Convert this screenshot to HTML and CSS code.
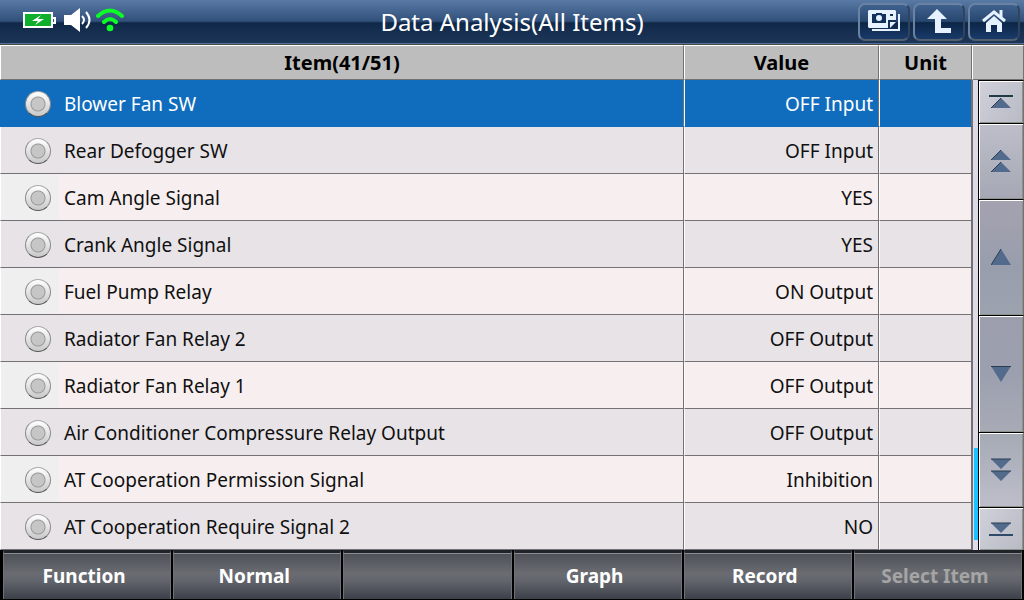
FILE: index.html
```html
<!DOCTYPE html>
<html lang="en">
<head>
  <meta charset="UTF-8">
  <title>Data Analysis</title>
  <link rel="stylesheet" href="styles.css">
</head>
<body>

  <!-- Title bar -->
  <header class="topbar">
    <div class="status">
      <svg width="33" height="18" viewBox="0 0 33 18">
        <rect x="1" y="2" width="28" height="14" fill="#0fae2c" stroke="#fff" stroke-width="2"/>
        <path d="M30 7h2v5h-2" fill="none" stroke="#fff" stroke-width="2"/>
        <path d="M18 4L9 10h6l-3 4 9-6h-6z" fill="#fff"/>
      </svg>
      <svg width="28" height="24" viewBox="0 0 28 24">
        <path d="M0 7h7L16 0v24L7 17H0z" fill="#fff"/>
        <path d="M18 8q4 4 0 8M22 4q7 8 0 16" fill="none" stroke="#fff" stroke-width="2"/>
      </svg>
      <svg width="28" height="24" viewBox="0 0 28 24">
        <path d="M2 8q12-11 24 0M8 14q6-6 12 0" fill="none" stroke="#0bff24" stroke-width="4" stroke-linecap="round"/>
        <circle cx="14" cy="20" r="3.3" fill="#0bff24"/>
      </svg>
    </div>
    <h1>Data Analysis(All Items)</h1>
    <div class="tools">
      <button type="button" aria-label="Screen capture">
        <svg width="32" height="22" viewBox="0 0 32 22">
          <path d="M1 0h26l1 1v10l-7 7H1l-1-1V1z" fill="#e6f2ff"/>
          <path d="M22 18v-6h6z" fill="#e6f2ff"/>
          <path d="M4 20h27V4" fill="none" stroke="#e6f2ff" stroke-width="2"/>
          <path d="M4 4h4V3h6v1h4v9H4zM22 4h3v2h-3z" fill="#12315a"/>
          <path d="M21 18v-7h7" fill="none" stroke="#12315a" stroke-width="2"/>
          <circle cx="11" cy="8" r="3" fill="#e6f2ff"/>
        </svg>
      </button>
      <button type="button" aria-label="Back">
        <svg width="25" height="24" viewBox="0 0 25 24">
          <path d="M10 0l10 10h-6v9h10v5H8V10H0z" fill="#e6f2ff"/>
        </svg>
      </button>
      <button type="button" aria-label="Home">
        <svg width="24" height="24" viewBox="0 0 24 24">
          <path d="M1 12L12 3l11 9M19 8V1" fill="none" stroke="#e6f2ff" stroke-width="3"/>
          <path d="M4 14l8-7 8 7v9h-5v-7H9v7H4z" fill="#e6f2ff"/>
        </svg>
      </button>
    </div>
  </header>

  <!-- Item list -->
  <main>
    <table>
      <thead>
        <tr><th class="item">Item(41/51)</th><th class="value">Value</th><th class="unit">Unit</th></tr>
      </thead>
      <tbody>
        <tr class="selected">
          <td><label><input type="radio" name="i1">Blower Fan SW</label></td><td>OFF Input</td><td></td>
        </tr>
        <tr>
          <td><label><input type="radio" name="i2">Rear Defogger SW</label></td><td>OFF Input</td><td></td>
        </tr>
        <tr>
          <td><label><input type="radio" name="i3">Cam Angle Signal</label></td><td>YES</td><td></td>
        </tr>
        <tr>
          <td><label><input type="radio" name="i4">Crank Angle Signal</label></td><td>YES</td><td></td>
        </tr>
        <tr>
          <td><label><input type="radio" name="i5">Fuel Pump Relay</label></td><td>ON Output</td><td></td>
        </tr>
        <tr>
          <td><label><input type="radio" name="i6">Radiator Fan Relay 2</label></td><td>OFF Output</td><td></td>
        </tr>
        <tr>
          <td><label><input type="radio" name="i7">Radiator Fan Relay 1</label></td><td>OFF Output</td><td></td>
        </tr>
        <tr>
          <td><label><input type="radio" name="i8">Air Conditioner Compressure Relay Output</label></td><td>OFF Output</td><td></td>
        </tr>
        <tr>
          <td><label><input type="radio" name="i9">AT Cooperation Permission Signal</label></td><td>Inhibition</td><td></td>
        </tr>
        <tr>
          <td><label><input type="radio" name="i10">AT Cooperation Require Signal 2</label></td><td>NO</td><td></td>
        </tr>
      </tbody>
    </table>

    <!-- Scroll controls -->
    <aside>
      <div class="cap"></div>
      <div class="scroll">
        <div class="track"><div class="thumb"></div></div>
        <div class="steps">
          <button type="button" class="end" aria-label="First">
            <svg width="24" height="14" viewBox="0 0 24 14"><path d="M0 1h24" stroke="#213c46" stroke-width="2"/><path d="M12 3l10 10H2z" fill="#526b8c"/><path d="M12 3L2 13" stroke="#2b3c50"/></svg>
          </button>
          <button type="button" class="page" aria-label="Page up">
            <svg width="20" height="24" viewBox="0 0 20 24"><path d="M10 1l10 10H0zM10 13l10 10H0z" fill="#526b8c"/><path d="M10 1L0 11M10 13L0 23" stroke="#2b3c50"/></svg>
          </button>
          <button type="button" class="line-up" aria-label="Up">
            <svg width="20" height="16" viewBox="0 0 20 16"><path d="M10 0l10 16H0z" fill="#526b8c"/><path d="M10 0L0 16" stroke="#2b3c50"/></svg>
          </button>
          <button type="button" class="line-down" aria-label="Down">
            <svg width="20" height="16" viewBox="0 0 20 16"><path d="M0 0h20L10 16z" fill="#526b8c"/><path d="M0 0h20" stroke="#2b3c50" stroke-width="2"/></svg>
          </button>
          <button type="button" class="page down" aria-label="Page down">
            <svg width="20" height="24" viewBox="0 0 20 24"><path d="M0 1h20L10 11zM0 13h20L10 23z" fill="#526b8c"/><path d="M0 1h20M0 13h20" stroke="#2b3c50"/></svg>
          </button>
          <button type="button" class="end" aria-label="Last">
            <svg width="24" height="14" viewBox="0 0 24 14"><path d="M2 1h20L12 11z" fill="#526b8c"/><path d="M2 1h20" stroke="#2b3c50"/><path d="M0 13h24" stroke="#2f4a66" stroke-width="2"/></svg>
          </button>
        </div>
      </div>
    </aside>
  </main>

  <!-- Function keys -->
  <footer>
    <button type="button">Function</button>
    <button type="button">Normal</button>
    <button type="button" aria-label="Unassigned"></button>
    <button type="button">Graph</button>
    <button type="button">Record</button>
    <button type="button" disabled>Select Item</button>
  </footer>

</body>
</html>
```

FILE: styles.css
```css
* {
  box-sizing: border-box;
}
body {
  margin: 0;
  min-height: 100vh;
  display: flex;
  flex-direction: column;
  background: #e7e3e7;
  font-family: "Noto Sans", Tahoma, sans-serif;
  font-size: 19px;
  line-height: 24px;
  color: #101010;
}
button {
  font: inherit;
  padding: 0;
  display: flex;
  align-items: center;
  justify-content: center;
}

/* title bar */
.topbar {
  height: 45px;
  display: grid;
  grid-template-columns: 1fr auto 1fr;
  align-items: center;
  background: linear-gradient(#597aa5, #31517b 48%, #102848 52%, #1c3557 94%);
  border-bottom: 1px solid #4a4942;
  box-shadow: inset 0 -1px #52719c;
}
.status {
  display: flex;
  align-items: center;
  gap: 8px;
  padding: 0 0 4px 23px;
}
.status svg:last-child {
  margin-left: -4px;
}
.topbar h1 {
  margin: 0;
  font-size: 24px;
  line-height: 32px;
  font-weight: normal;
  color: #fff;
}
.tools {
  display: flex;
  justify-content: flex-end;
  gap: 3px;
  padding-right: 4px;
}
.tools button {
  width: 52px;
  height: 38px;
  padding-bottom: 2px;
  border: 2px solid #6b83a2;
  border-right-color: #30435f;
  border-bottom-color: #53616f;
  border-radius: 7px;
  background: linear-gradient(#3f618e, #28476f 48%, #0d2647 52%, #193a6a);
}

/* list */
main {
  flex: 1;
  display: flex;
}
table {
  flex: 1;
  border-collapse: separate;
  border-spacing: 0;
  table-layout: fixed;
}
th {
  height: 35px;
  padding: 0;
  font-size: 20px;
  color: #000;
  background: #bdbdbd;
  border: 1px solid #fff;
  border-right-color: #737173;
  border-bottom-color: #737173;
}
.item {
  width: 684px;
}
.value {
  width: 195px;
}
.unit {
  width: 93px;
}
td {
  height: 47px;
  padding: 2px 5px 0 0;
  text-align: right;
  background: #e7e3e7;
  border-left: 1px solid #fff;
  border-right: 1px solid #737173;
  border-bottom: 1px solid #737173;
}
td:first-child {
  padding-left: 24px;
  text-align: left;
}
tbody tr:nth-child(odd) td {
  background: #f7efef;
}
tbody tr:nth-child(odd) td:first-child {
  background: linear-gradient(90deg, #efefef 58px, #f7efef 58px);
}
tbody tr.selected:nth-child(n) td:nth-child(n) {
  background: #106dbd;
  border-bottom-color: #106dbd;
  color: #fff;
}
tbody .selected td:first-child {
  border-left-color: #106dbd;
}
label {
  display: flex;
  align-items: center;
  gap: 13px;
}
input {
  appearance: none;
  width: 26px;
  height: 26px;
  margin: 0;
  border: 1px solid #8a8a8a;
  border-top-color: #aaa;
  border-bottom-color: #555;
  border-radius: 50%;
  background: radial-gradient(circle, #c6c6c6 6px, #999 7px, transparent 8px), linear-gradient(#fff, #c8c8c8);
}

/* scroll controls */
aside {
  width: 52px;
  display: flex;
  flex-direction: column;
}
.cap {
  height: 35px;
  background: #bdbdbd;
  border: 1px solid #fff;
  border-right-color: #737173;
  border-bottom-color: #737173;
}
.scroll {
  flex: 1;
  display: flex;
  background: #dedbe7;
  border-left: 1px solid #737173;
}
.track {
  width: 5px;
  display: flex;
  flex-direction: column;
  justify-content: flex-end;
  padding: 0 0 10px 1px;
}
.thumb {
  height: 20%;
  background: #18c3ff;
}
.steps {
  flex: 1;
  display: flex;
  flex-direction: column;
}
.steps button {
  flex: 75 1 0;
  border: 1px solid #000;
  border-right-color: #737173;
  border-bottom-width: 0;
  box-shadow: inset 1px 1px #fff, inset -1px -1px #8c928c;
  background: linear-gradient(#bdbeca, #a5a8b4);
}
.steps .end {
  flex-grow: 43;
  background: linear-gradient(120deg, #d0d1da, #b8bac4);
}
.steps .line-up {
  flex-grow: 117;
  background: linear-gradient(#a5a2b0, #989eac 60%, #9ca2ae);
}
.steps .line-down {
  flex-grow: 117;
  background: linear-gradient(#9c9eae, #9ca0ae 50%, #a8aab6);
}
.steps .down {
  background: linear-gradient(#a5aab5, #bdbeca);
}

/* function keys */
footer {
  height: 50px;
  display: flex;
  gap: 2px;
  padding: 0 2px 1px 3px;
  background: #000;
}
footer button {
  flex: 1;
  padding-right: 6px;
  border: 1px solid #6e7278;
  border-top: 3px solid #202428;
  border-bottom: 0;
  box-shadow: inset 0 1px #8c8e94;
  background: linear-gradient(#4c5056, #6a6c72 45%, #62656c 60%, #3c4048);
  color: #fff;
  font-weight: bold;
  font-size: 19px;
}
footer button:disabled {
  color: #a5a5a5;
}
```
